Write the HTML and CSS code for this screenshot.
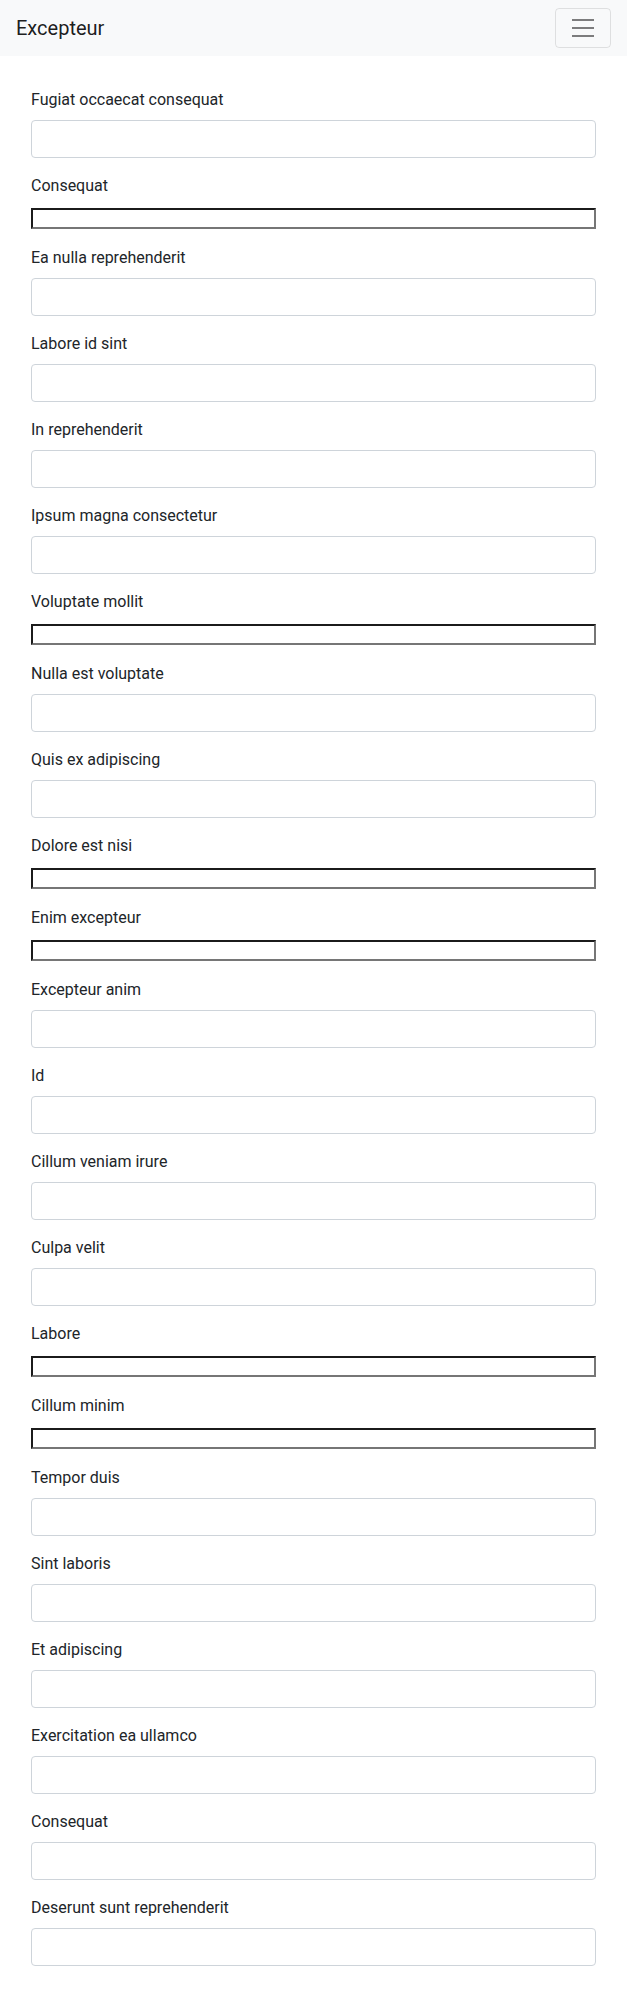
FILE: index.html
```html
<!DOCTYPE html>
<html lang="en">
<head>
<meta charset="utf-8">
<title>Excepteur</title>
<link rel="stylesheet" href="styles.css">
</head>
<body>
<nav class="navbar">
  <span class="brand">Excepteur</span>
  <button class="toggler" type="button" aria-label="Toggle navigation">
    <svg width="30" height="30" viewBox="0 0 30 30"><path d="M4 7h22M4 15h22M4 23h22" stroke="rgba(0,0,0,0.5)" stroke-width="2" stroke-linecap="butt" fill="none"/></svg>
  </button>
</nav>
<main class="content">
  <form class="form">
    <div class="group"><label class="label">Fugiat occaecat consequat</label><input class="control" type="text"></div>
    <div class="group"><label class="label">Consequat</label><input class="plain" type="text"></div>
    <div class="group"><label class="label">Ea nulla reprehenderit</label><input class="control" type="text"></div>
    <div class="group"><label class="label">Labore id sint</label><input class="control" type="text"></div>
    <div class="group"><label class="label">In reprehenderit</label><input class="control" type="text"></div>
    <div class="group"><label class="label">Ipsum magna consectetur</label><input class="control" type="text"></div>
    <div class="group"><label class="label">Voluptate mollit</label><input class="plain" type="text"></div>
    <div class="group"><label class="label">Nulla est voluptate</label><input class="control" type="text"></div>
    <div class="group"><label class="label">Quis ex adipiscing</label><input class="control" type="text"></div>
    <div class="group"><label class="label">Dolore est nisi</label><input class="plain" type="text"></div>
    <div class="group"><label class="label">Enim excepteur</label><input class="plain" type="text"></div>
    <div class="group"><label class="label">Excepteur anim</label><input class="control" type="text"></div>
    <div class="group"><label class="label">Id</label><input class="control" type="text"></div>
    <div class="group"><label class="label">Cillum veniam irure</label><input class="control" type="text"></div>
    <div class="group"><label class="label">Culpa velit</label><input class="control" type="text"></div>
    <div class="group"><label class="label">Labore</label><input class="plain" type="text"></div>
    <div class="group"><label class="label">Cillum minim</label><input class="plain" type="text"></div>
    <div class="group"><label class="label">Tempor duis</label><input class="control" type="text"></div>
    <div class="group"><label class="label">Sint laboris</label><input class="control" type="text"></div>
    <div class="group"><label class="label">Et adipiscing</label><input class="control" type="text"></div>
    <div class="group"><label class="label">Exercitation ea ullamco</label><input class="control" type="text"></div>
    <div class="group"><label class="label">Consequat</label><input class="control" type="text"></div>
    <div class="group"><label class="label">Deserunt sunt reprehenderit</label><input class="control" type="text"></div>
  </form>
</main>
</body>
</html>
```
FILE: styles.css
```css
* { box-sizing: border-box; }
html, body { margin: 0; padding: 0; }
body {
  font-family: Roboto, "Liberation Sans", Arial, sans-serif;
  font-size: 16px;
  line-height: 1.5;
  color: #212529;
  background: #fff;
}
.navbar {
  display: flex;
  align-items: center;
  justify-content: space-between;
  height: 56px;
  padding: 8px 16px;
  background: #f8f9fa;
}
.brand {
  font-size: 20px;
  line-height: 30px;
  color: rgba(0,0,0,0.9);
}
.toggler {
  display: flex;
  align-items: center;
  justify-content: center;
  width: 56px;
  height: 40px;
  padding: 4px 12px;
  background: transparent;
  border: 1px solid rgba(0,0,0,0.1);
  border-radius: 4px;
}
.toggler svg { display: block; }
.content {
  padding: 32px 31px;
}
.form { display: flex; flex-direction: column; gap: 16px; }
.group { display: flex; flex-direction: column; }
.label {
  display: block;
  line-height: 24px;
  margin-bottom: 8px;
}
.control {
  display: block;
  width: 100%;
  height: 38px;
  padding: 6px 12px;
  font: inherit;
  border: 1px solid #ced4da;
  border-radius: 4px;
  background: #fff;
}
.plain {
  display: block;
  width: 100%;
  height: 21px;
  margin: 2px 0 1px;
  padding: 1px 2px;
  font-size: 13.33px;
  border-width: 2px;
  border-style: solid;
  border-color: #1b1b1b #767676 #767676 #1b1b1b;
  background: #fff;
}
```
